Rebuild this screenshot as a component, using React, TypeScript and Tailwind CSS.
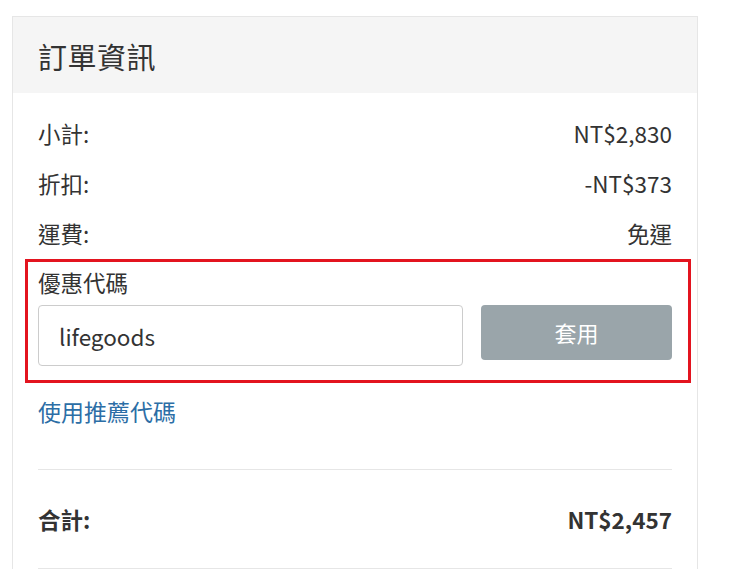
import React from "react";

export default function App() {
  const font = { fontFamily: '"Noto Sans CJK TC", "Noto Sans", sans-serif' };
  return (
    <div className="min-h-[571px] w-[740px] bg-white text-[#333]" style={font}>
      <div className="pt-[16px] pl-[12px]">
        <div className="w-[686px] border border-b-0 border-[#e6e6e6]">
          <div className="flex h-[76px] items-center bg-[#f5f5f5] pl-[25px] pt-[3px]">
            <h2 className="text-[29px] font-normal leading-none tracking-[0.5px]">訂單資訊</h2>
          </div>
          <div className="px-[25px] pt-[16px]">
            <div className="flex h-[50px] items-center justify-between text-[22.5px]">
              <span>小計:</span>
              <span>NT$2,830</span>
            </div>
            <div className="flex h-[50px] items-center justify-between text-[22.5px]">
              <span>折扣:</span>
              <span>-NT$373</span>
            </div>
            <div className="flex h-[50px] items-start justify-between pt-[12px] text-[22.5px] leading-[25px]">
              <span>運費:</span>
              <span>免運</span>
            </div>
            <div className="-ml-[13px] -mr-[19px] border-[3px] border-[#e3141f] pl-[10px] pr-[16px] pt-[5px] pb-[14px]">
              <div className="text-[22.5px] leading-[30px]">優惠代碼</div>
              <div className="mt-[8px] flex items-start justify-between">
                <input
                  readOnly
                  value="lifegoods"
                  className="h-[61px] w-[425px] rounded-[4px] border border-[#cccccc] px-[20px] text-[22.5px] text-[#333] outline-none"
                  style={font}
                />
                <button
                  className="h-[55px] w-[191px] rounded-[4px] bg-[#9aa5aa] text-[22px] text-white"
                  style={font}
                >
                  套用
                </button>
              </div>
            </div>
            <div className="mt-[13px] text-[23px] leading-[30px] text-[#2c6ea6]">使用推薦代碼</div>
            <div className="mt-[43px] border-t border-[#e6e6e6]" />
            <div className="flex h-[98px] items-center justify-between pt-[2px] text-[22.5px] font-bold">
              <span>合計:</span>
              <span>NT$2,457</span>
            </div>
            <div className="border-t border-[#e6e6e6]" />
          </div>
        </div>
      </div>
    </div>
  );
}
